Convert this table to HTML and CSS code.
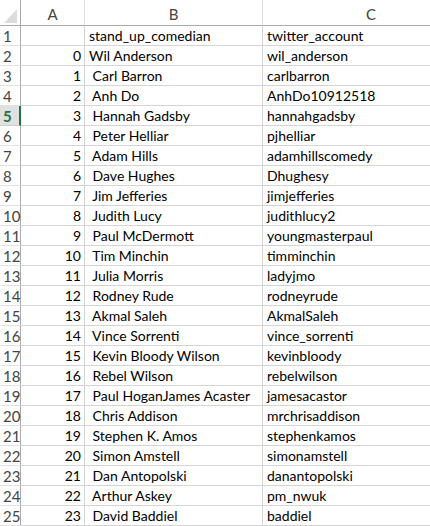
FILE: index.html
```html
<!DOCTYPE html>
<html>
<head>
<meta charset="utf-8">
<link rel="stylesheet" href="styles.css">
</head>
<body>
<div class="sheet">
  <div class="hdr corner"><svg class="tri" width="13" height="14" viewBox="0 0 13 14"><polygon points="0,14 13,14 13,0" fill="#dcdcdc"/></svg></div>
  <div class="hdr col">A</div>
  <div class="hdr col">B</div>
  <div class="hdr col last">C</div>

  <div class="rh">1</div><div class="cell num"></div><div class="cell txt">stand_up_comedian</div><div class="cell txt last">twitter_account</div>
  <div class="rh">2</div><div class="cell num">0</div><div class="cell txt">Wil Anderson</div><div class="cell txt last">wil_anderson</div>
  <div class="rh">3</div><div class="cell num">1</div><div class="cell txt"> Carl Barron</div><div class="cell txt last">carlbarron</div>
  <div class="rh">4</div><div class="cell num">2</div><div class="cell txt"> Anh Do</div><div class="cell txt last">AnhDo10912518</div>
  <div class="rh sel">5</div><div class="cell num">3</div><div class="cell txt"> Hannah Gadsby</div><div class="cell txt last">hannahgadsby</div>
  <div class="rh">6</div><div class="cell num">4</div><div class="cell txt"> Peter Helliar</div><div class="cell txt last">pjhelliar</div>
  <div class="rh">7</div><div class="cell num">5</div><div class="cell txt"> Adam Hills</div><div class="cell txt last">adamhillscomedy</div>
  <div class="rh">8</div><div class="cell num">6</div><div class="cell txt"> Dave Hughes</div><div class="cell txt last">Dhughesy</div>
  <div class="rh">9</div><div class="cell num">7</div><div class="cell txt"> Jim Jefferies</div><div class="cell txt last">jimjefferies</div>
  <div class="rh">10</div><div class="cell num">8</div><div class="cell txt"> Judith Lucy</div><div class="cell txt last">judithlucy2</div>
  <div class="rh">11</div><div class="cell num">9</div><div class="cell txt"> Paul McDermott</div><div class="cell txt last">youngmasterpaul</div>
  <div class="rh">12</div><div class="cell num">10</div><div class="cell txt"> Tim Minchin</div><div class="cell txt last">timminchin</div>
  <div class="rh">13</div><div class="cell num">11</div><div class="cell txt"> Julia Morris</div><div class="cell txt last">ladyjmo</div>
  <div class="rh">14</div><div class="cell num">12</div><div class="cell txt"> Rodney Rude</div><div class="cell txt last">rodneyrude</div>
  <div class="rh">15</div><div class="cell num">13</div><div class="cell txt"> Akmal Saleh</div><div class="cell txt last">AkmalSaleh</div>
  <div class="rh">16</div><div class="cell num">14</div><div class="cell txt"> Vince Sorrenti</div><div class="cell txt last">vince_sorrenti</div>
  <div class="rh">17</div><div class="cell num">15</div><div class="cell txt"> Kevin Bloody Wilson</div><div class="cell txt last">kevinbloody</div>
  <div class="rh">18</div><div class="cell num">16</div><div class="cell txt"> Rebel Wilson</div><div class="cell txt last">rebelwilson</div>
  <div class="rh">19</div><div class="cell num">17</div><div class="cell txt"> Paul HoganJames Acaster</div><div class="cell txt last">jamesacastor</div>
  <div class="rh">20</div><div class="cell num">18</div><div class="cell txt"> Chris Addison</div><div class="cell txt last">mrchrisaddison</div>
  <div class="rh">21</div><div class="cell num">19</div><div class="cell txt"> Stephen K. Amos</div><div class="cell txt last">stephenkamos</div>
  <div class="rh">22</div><div class="cell num">20</div><div class="cell txt"> Simon Amstell</div><div class="cell txt last">simonamstell</div>
  <div class="rh">23</div><div class="cell num">21</div><div class="cell txt"> Dan Antopolski</div><div class="cell txt last">danantopolski</div>
  <div class="rh">24</div><div class="cell num">22</div><div class="cell txt"> Arthur Askey</div><div class="cell txt last">pm_nwuk</div>
  <div class="rh">25</div><div class="cell num">23</div><div class="cell txt"> David Baddiel</div><div class="cell txt last">baddiel</div>
</div>
</body>
</html>
```
FILE: styles.css
```css
html, body {
  margin: 0;
  padding: 0;
  background: #fff;
  overflow: hidden;
  width: 430px;
  height: 526px;
}
.sheet {
  display: grid;
  grid-template-columns: 21px 64px 178px 167px;
  font-family: Lato, "Open Sans", sans-serif;
  font-size: 14px;
  width: 430px;
}
.hdr {
  box-sizing: border-box;
  height: 26px;
  border-bottom: 1px solid #ababab;
  color: #444;
  font-size: 15px;
  display: flex;
  align-items: center;
  justify-content: center;
  padding-top: 2px;
}
.corner {
  border-right: 1px solid #ababab;
  justify-content: flex-end;
  align-items: flex-end;
  padding: 0 3px 2px 0;
}
.tri { display: block; }
.col {
  border-right: 1px solid #e1e1e1;
}
.hdr.last {
  border-right: none;
  justify-content: flex-start;
  padding-left: 103px;
}
.rh {
  box-sizing: border-box;
  height: 20px;
  border-right: 1px solid #ababab;
  border-bottom: 1px solid #e1e1e1;
  color: #444;
  font-size: 15px;
  padding: 1px 0 0 3px;
  line-height: 18px;
}
.rh.sel {
  background: #e1e1e1;
  color: #217346;
  font-weight: bold;
  border-right: 2px solid #217346;
  border-bottom-color: #cfcfcf;
}
.cell {
  box-sizing: border-box;
  height: 20px;
  border-right: 1px solid #d4d4d4;
  border-bottom: 1px solid #d4d4d4;
  color: #000;
  line-height: 18px;
  padding-top: 1px;
  white-space: pre;
  overflow: hidden;
  font-size: 14px;
}
.cell.last {
  border-right: none;
}
.num {
  text-align: right;
  padding-right: 3px;
}
.txt {
  padding-left: 4px;
}
```
